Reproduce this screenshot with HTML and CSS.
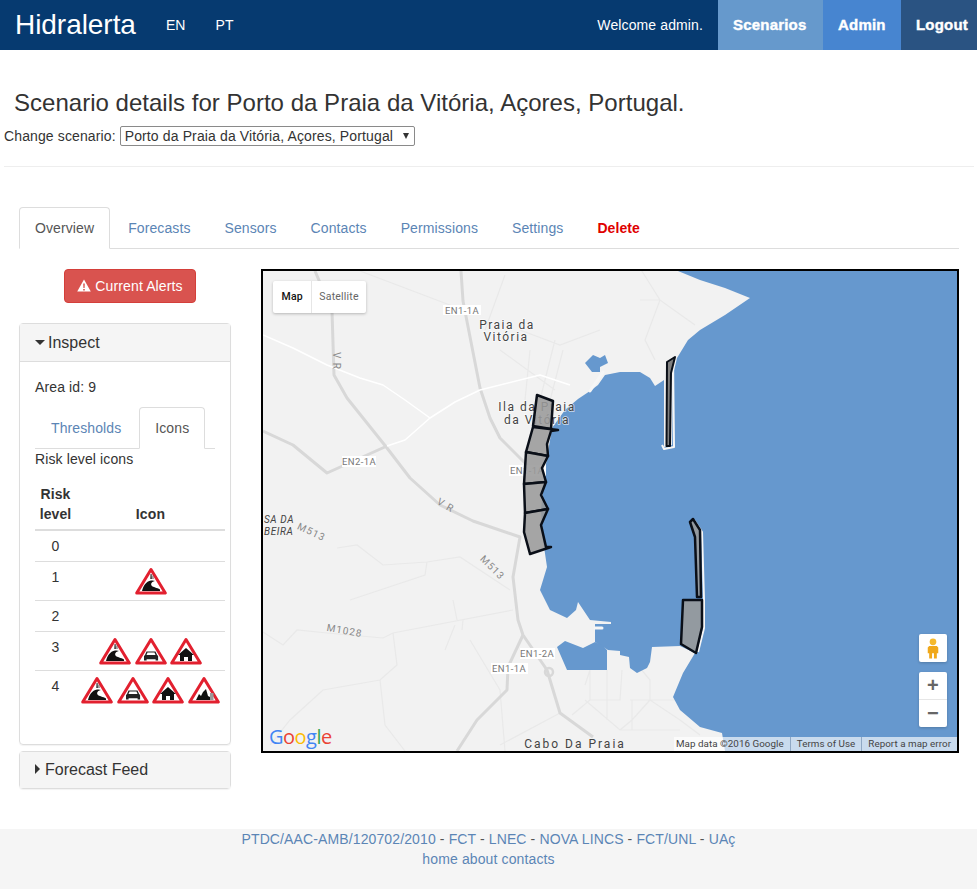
FILE: index.html
```html
<!DOCTYPE html>
<html lang="en">
<head>
<meta charset="utf-8">
<title>Hidralerta</title>
<link rel="stylesheet" href="styles.css">
</head>
<body>
<svg class="defs" aria-hidden="true">
  <symbol id="tri" viewBox="0 0 32 28"><path d="M16 2.5 30.3 26H1.7Z" fill="#fff" stroke="#e2202f" stroke-width="3" stroke-linejoin="round"/></symbol>
  <symbol id="i-wave" viewBox="0 0 32 28"><use href="#tri"/><path d="M7 24C8 19 11 14.500 16 13.500 18 13.200 19 13.500 20 14 17 14.500 15.500 16.500 16.500 18.500 18 20.500 22 20.500 25 22.500V24Z" fill="#111"/><path d="M15.500 7h1.200l.3 5h-1.800ZM17.500 8.500h.8l.2 3.500h-1Z" fill="#444"/></symbol>
  <symbol id="i-car" viewBox="0 0 32 28"><use href="#tri"/><path d="M11.500 14.500h9l1.600 3.500 1 1v4.500h-2.500v-1.300h-9v1.300H9v-4.500l1-1Z" fill="#222"/><path d="M12.500 15.500h7l1 2.500h-9Z" fill="#fff"/></symbol>
  <symbol id="i-house" viewBox="0 0 32 28"><use href="#tri"/><path d="M16 11 24 18h-2v6h-4v-4h-4v4h-4v-6H8Z" fill="#111"/></symbol>
  <symbol id="i-land" viewBox="0 0 32 28"><use href="#tri"/><path d="M8 24 11 18 13 20 15 16 18 13 20 20 22 21V24Z" fill="#111"/><path d="M22 17h3.500v7H22Z" fill="#999"/></symbol>
</svg>

<nav class="navbar">
  <a class="brand">Hidralerta</a>
  <a class="lang">EN</a>
  <a class="lang">PT</a>
  <span class="welcome">Welcome admin.</span>
  <a class="action scenarios">Scenarios</a>
  <a class="action admin">Admin</a>
  <a class="action logout">Logout</a>
</nav>

<header class="page-head">
  <h3 class="title">Scenario details for Porto da Praia da Vitória, Açores, Portugal.</h3>
  <div class="change">
    <label class="change-label">Change scenario:</label>
    <span class="select-wrap"><select class="change-select"><option>Porto da Praia da Vitória, Açores, Portugal</option></select></span>
  </div>
</header>
<hr class="rule">

<main class="content">
  <ul class="tabs">
    <li class="tab active">Overview</li>
    <li class="tab">Forecasts</li>
    <li class="tab">Sensors</li>
    <li class="tab">Contacts</li>
    <li class="tab">Permissions</li>
    <li class="tab">Settings</li>
    <li class="tab danger">Delete</li>
  </ul>

  <div class="columns">
    <aside class="side">
      <div class="alert-wrap">
        <button class="alert-btn"><svg class="warn" viewBox="0 0 14 13"><path d="M7 .5 13.800 12.500H.2Z" fill="#fff"/><path d="M6.200 4.500h1.600l-.2 4.500H6.400ZM6.200 10h1.600v1.500H6.200Z" fill="#d9534f"/></svg> Current Alerts</button>
      </div>

      <section class="panel">
        <div class="panel-head"><span class="caret-down"></span>Inspect</div>
        <div class="panel-body">
          <div>Area id: 9</div>
          <ul class="tabs inner">
            <li class="tab">Thresholds</li>
            <li class="tab active">Icons</li>
          </ul>
          <div>Risk level icons</div>
          <table class="risk">
            <thead><tr><th class="col-level">Risk level</th><th>Icon</th></tr></thead>
            <tbody>
              <tr><td>0</td><td></td></tr>
              <tr><td>1</td><td><div class="icons"><svg class="ico"><use href="#i-wave"/></svg></div></td></tr>
              <tr><td>2</td><td></td></tr>
              <tr><td>3</td><td><div class="icons"><svg class="ico"><use href="#i-wave"/></svg><svg class="ico"><use href="#i-car"/></svg><svg class="ico"><use href="#i-house"/></svg></div></td></tr>
              <tr class="last"><td>4</td><td><div class="icons"><svg class="ico"><use href="#i-wave"/></svg><svg class="ico"><use href="#i-car"/></svg><svg class="ico"><use href="#i-house"/></svg><svg class="ico"><use href="#i-land"/></svg></div></td></tr>
            </tbody>
          </table>
        </div>
      </section>

      <section class="panel closed">
        <div class="panel-head"><span class="caret-right"></span>Forecast Feed</div>
      </section>
    </aside>

    <div class="map">
      <svg class="map-canvas" viewBox="263 271 694 480">
        <rect x="263" y="271" width="694" height="480" fill="#f2f2f2"/>
        <!-- minor roads -->
        <g class="road-thin">
          <path d="M337 548 357 545 383 565 427 562 460 557 510 590"/>
          <path d="M263 632 283 645 297 630 327 633 383 638 393 633 513 610"/>
          <path d="M393 633 397 665 380 680 323 690 290 720 270 745"/>
          <path d="M380 680 385 725 405 751"/>
          <path d="M427 562 425 575 350 600"/>
          <path d="M470 640 500 690 505 751M560 713 500 745M455 625 445 650M453 600 457 620M463 620 462 630"/>
          <path d="M505 275 485 330M360 271 463 310M520 330 560 345 600 330M500 350 555 390M530 350 525 400M555 340 540 400M563 350 545 420"/>
          <path d="M640 268 660 300 645 340 655 360M640 300 660 300 695 325"/>
          <path d="M590 670V700L572 715M607 670V720M622 670 620 700H590M630 700H680M640 668 650 680V700L680 720 700 735M585 700 620 730H680M650 700 632 720 620 730M632 700V730M590 670 585 685"/>
        </g>
        <!-- water -->
        <path class="water" d="M678 271 700 280 725 288 750 298 725 315 700 330 688 340 677 358 673 375 672 445 664 447 664 380 655 386 650 378 640 372 620 372 605 375 598 385 590 391 578 399 565 410 552 428 545 470 541 510 543 540 547 567 540 590 550 610 567 618 576 610 578 602 590 620 611 622 611 624 595 624 595 642 608 650 620 651 620 655 629 657 630 668 637 673 647 668 650 662 652 647 680 646 695 653 683 673 673 697 680 710 700 727 722 733 725 751H957V271Z"/>
        <path class="water" d="M585 363 593 355 600 358 605 355 608 363 600 367 600 372 592 372Z"/>
        <path class="water" d="M557 647 565 641 583 648 595 642 602 645 607 650V670H567Z"/>
        <path class="pier" d="M603 372 590 391" />
        <path class="pier" d="M595 628H602" />
        <path class="halo" d="M673 358 674 447 664 449 662 445"/>
        <path class="halo" d="M694 520 702 532 704 600 704 628 698 652"/>
        <!-- main roads -->
        <g class="road">
          <path d="M315 271 332 311 334 375 347 398 387 448 410 478 440 505 473 521 520 537 513 577 518 620 523 635 547 670 560 713 593 737"/>
          <path d="M461 271 463 301 480 388 490 418 500 438 527 465"/>
          <path d="M263 431 293 445 327 473 387 446"/>
          <path d="M523 635 508 667 507 690 477 720 457 751"/>
        </g>
        <circle cx="549" cy="672" r="4" fill="none" stroke="#d8d8d8" stroke-width="2.500"/>
        <g class="road-white">
          <path d="M263 335 293 348 327 365 360 378 383 385 405 400 430 418"/>
          <path d="M387 446 405 440 430 418 455 402 480 390 540 375 570 385"/>
        </g>
        <!-- road shields -->
        <g class="shield-box">
          <rect x="443" y="305" width="38" height="10"/>
          <rect x="342" y="456" width="34" height="11"/>
          <rect x="509" y="465" width="37" height="11"/>
          <rect x="520" y="648" width="35" height="11"/>
          <rect x="491" y="663" width="37" height="11"/>
        </g>
        <g class="shield">
          <text x="462" y="314">EN1-1A</text>
          <text x="359" y="465">EN2-1A</text>
          <text x="527" y="474">EN1-1A</text>
          <text x="537" y="657">EN1-2A</text>
          <text x="509" y="672">EN1-1A</text>
        </g>
        <g class="road-name">
          <text transform="translate(333 361) rotate(90)">V R</text>
          <text transform="translate(444 508) rotate(30)">V R</text>
          <text transform="translate(310 535) rotate(25)">M513</text>
          <text transform="translate(490 570) rotate(45)">M513</text>
          <text transform="translate(344 634) rotate(10)">M1028</text>
        </g>
        <g class="place">
          <text x="507" y="329">Praia da</text>
          <text x="506" y="341">Vitória</text>
          <text x="537" y="411">Ila da Praia</text>
          <text x="537" y="424">da Vitória</text>
        </g>
        <text class="place-big" x="575" y="748">Cabo Da Praia</text>
        <text class="locality" x="264" y="523">SA DA</text>
        <text class="locality" x="264" y="535">BEIRA</text>
        <!-- areas -->
        <g class="area">
          <path d="M537 395 553 401 551 429 533 426Z"/>
          <path d="M533 427 558 430 551 431 547 444 548 456 526 452Z"/>
          <path d="M526 452 548 456 542 468 546 482 524 484Z"/>
          <path d="M524 484 546 482 541 495 548 509 525 513Z"/>
          <path d="M525 513 548 509 541 525 546 547 551 547 530 554 524 532Z"/>
          <path class="dark" d="M675 357 667 362 666.500 446 670 446 671 373Z"/>
          <path d="M690 522 693 519 700 530 701 597 697 597 695 537Z"/>
          <path d="M683 600H702V627L696 653 681 644Z"/>
        </g>
        <text class="google" x="269" y="744"><tspan fill="#4285f4">G</tspan><tspan fill="#ea4335">o</tspan><tspan fill="#fbbc05">o</tspan><tspan fill="#4285f4">g</tspan><tspan fill="#34a853">l</tspan><tspan fill="#ea4335">e</tspan></text>
      </svg>

      <div class="maptype">
        <span class="maptype-item on">Map</span>
        <span class="maptype-item">Satellite</span>
      </div>
      <div class="pegman">
        <svg class="peg-svg" viewBox="0 0 14 22"><circle cx="7" cy="4" r="3.500" fill="#f5b92c"/><path d="M3 8.500h8l1.500 1.500V16H11V21.500H8V16H6v5.500H3V16H1.500V10Z" fill="#f0a81a"/></svg>
      </div>
      <div class="zoom">
        <span class="zoom-btn">+</span>
        <span class="zoom-btn">−</span>
      </div>
      <div class="attrib">
        <span class="attrib-item first">Map data ©2016 Google</span>
        <span class="attrib-item">Terms of Use</span>
        <span class="attrib-item">Report a map error</span>
      </div>
    </div>
  </div>
</main>

<footer class="footer">
  <div><a>PTDC/AAC-AMB/120702/2010</a> - <a>FCT</a> - <a>LNEC</a> - <a>NOVA LINCS</a> - <a>FCT/UNL</a> - <a>UAç</a></div>
  <div><a>home</a> <a>about</a> <a>contacts</a></div>
</footer>
</body>
</html>
```
FILE: styles.css
```css
* { box-sizing: border-box; }
html, body { margin: 0; padding: 0; }
body {
  font-family: "Liberation Sans", Arial, sans-serif;
  font-size: 14px;
  line-height: 20px;
  letter-spacing: .12px;
  color: #333;
  background: #fff;
}
.defs { position: absolute; width: 0; height: 0; }

/* navbar */
.navbar {
  display: flex;
  align-items: center;
  height: 50px;
  background: #063a70;
  color: #fff;
}
.brand { font-size: 28px; margin-left: 15px; margin-right: 30px; letter-spacing: -.05px; }
.lang { margin-right: 30px; }
.welcome { margin-left: auto; margin-right: 15px; }
.action {
  height: 50px;
  line-height: 50px;
  padding: 0 15px;
  font-weight: bold;
  font-size: 15px;
  letter-spacing: .2px;
  -webkit-text-stroke: 0.4px #fff;
}
.scenarios { background: #6699cc; width: 105px; }
.admin { background: #4785d0; width: 78px; }
.logout { background: #2a5382; width: 76px; padding-right: 0; }

/* heading */
.page-head { padding: 40px 0 0; }
.title {
  margin: 0 0 0 14px;
  font-size: 24px;
  font-weight: normal;
  line-height: 26px;
  letter-spacing: .02px;
  color: #333;
}
.change {
  display: flex;
  align-items: center;
  margin: 10px 0 0 4px;
  height: 20px;
}
.change-label { margin-right: 4px; }
.select-wrap { position: relative; display: block; width: 295px; height: 20px; }
.select-wrap::after {
  content: "";
  position: absolute;
  right: 6px;
  top: 7px;
  border-top: 6px solid #333;
  border-left: 3.5px solid transparent;
  border-right: 3.5px solid transparent;
}
.change-select {
  display: block;
  appearance: none;
  -webkit-appearance: none;
  width: 295px;
  height: 20px;
  padding: 0 0 0 4px;
  font: 14px "Liberation Sans", Arial, sans-serif;
  letter-spacing: .13px;
  color: #333;
  background: #fff;
  border: 1px solid #8a8a8a;
  border-radius: 2px;
}
.rule {
  margin: 20px 3px 0 4px;
  border: 0;
  border-top: 1px solid #eee;
}

/* tabs */
.content { padding: 40px 18px 0 19px; }
.tabs {
  display: flex;
  list-style: none;
  margin: 0;
  padding: 0;
  border-bottom: 1px solid #ddd;
  letter-spacing: .1px;
}
.tab {
  height: 42px;
  margin-right: 2px;
  margin-bottom: -1px;
  padding: 10px 15px;
  border: 1px solid transparent;
  border-radius: 4px 4px 0 0;
  color: #5b85b5;
}
.tab.active {
  color: #555;
  background: #fff;
  border-color: #ddd #ddd #fff;
}
.tab.danger { color: #e00000; font-weight: bold; }

/* columns */
.columns {
  display: grid;
  grid-template-columns: 212px 698px;
  column-gap: 30px;
  margin-top: 20px;
}
.alert-wrap { display: flex; justify-content: center; padding-left: 10px; }
.alert-btn {
  height: 34px;
  width: 132px;
  padding: 0;
  font: 14px "Liberation Sans", Arial, sans-serif;
  letter-spacing: .12px;
  color: #fff;
  background: #d9534f;
  border: 1px solid #d43f3a;
  border-radius: 4px;
}
.warn { width: 14px; height: 13px; vertical-align: -1px; }

.panel {
  margin-top: 20px;
  border: 1px solid #ddd;
  border-radius: 4px;
  box-shadow: 0 1px 1px rgba(0,0,0,.05);
}
.panel.closed { margin-top: 6px; }
.panel-head {
  padding: 10px 15px;
  font-size: 16px;
  line-height: 17px;
  letter-spacing: 0;
  color: #333;
  background: #f5f5f5;
}
.closed .panel-head { line-height: 16px; }
.panel > .panel-body { border-top: 1px solid #ddd; }
.panel-body { padding: 15px 15px 35px; }
.caret-down, .caret-right { display: inline-block; margin-right: 3px; vertical-align: 3px; }
.caret-down { border-top: 5px solid #333; border-left: 5px solid transparent; border-right: 5px solid transparent; }
.caret-right { border-left: 5px solid #333; border-top: 5px solid transparent; border-bottom: 5px solid transparent; vertical-align: 1px; margin-right: 5px; }

.tabs.inner { margin-top: 10px; margin-right: 0; }
.risk {
  width: 190px;
  margin-top: 10px;
  border-collapse: collapse;
  table-layout: fixed;
}
.risk th, .risk td {
  padding: 5px 0;
  text-align: center;
  vertical-align: top;
  border-top: 1px solid #ddd;
}
.risk th { border-top: 0; border-bottom: 2px solid #ddd; vertical-align: bottom; }
.col-level { width: 41px; }
.risk td { height: 20px; }
.risk tr:nth-child(1) td { border-top: 0; }
.icons { display: flex; justify-content: center; gap: 3.500px; }
.ico { width: 32px; height: 28px; display: block; }

/* map */
.map {
  position: relative;
  width: 698px;
  height: 484px;
  border: 2px solid #000;
  overflow: hidden;
}
.map-canvas { display: block; width: 694px; height: 480px; }
.water { fill: #6698ce; }
.pier { fill: none; stroke: #f6f6f6; stroke-width: 3; stroke-linecap: round; }
.halo { fill: none; stroke: #f6f6f6; stroke-width: 2; stroke-linejoin: round; }
.road path { fill: none; stroke: #d8d8d8; stroke-width: 3; stroke-linejoin: round; }
.road-thin path { fill: none; stroke: #e9e9e9; stroke-width: 1.200; }
.road-white path { fill: none; stroke: #fff; stroke-width: 1.500; stroke-linejoin: round; }
.shield-box rect { fill: #fff; }
.shield text { font: 9.500px Roboto, sans-serif; fill: #777; text-anchor: middle; letter-spacing: .4px; }
.road-name text { font: 10px Roboto, sans-serif; fill: #888; text-anchor: middle; letter-spacing: 1px; }
.place text {
  font: 12px Roboto, sans-serif;
  fill: #444;
  text-anchor: middle;
  letter-spacing: 1.500px;
  stroke: #fff;
  stroke-width: 1.500px;
  stroke-opacity: .7;
  paint-order: stroke;
}
.place-big { font: 12px Roboto, sans-serif; fill: #444; text-anchor: middle; letter-spacing: 2px; }
.locality { font: italic 10px Roboto, sans-serif; fill: #444; letter-spacing: .6px; }
.area path {
  fill: #9a9a9a;
  fill-opacity: .88;
  stroke: #0a0f18;
  stroke-width: 2.500;
  stroke-linejoin: round;
}
.area .dark { fill: #808080; fill-opacity: 1; stroke-width: 2; }
.google { font: 500 20px "Open Sans", sans-serif; letter-spacing: -.5px; }

.maptype {
  position: absolute;
  left: 10px;
  top: 10px;
  display: flex;
  height: 32px;
  background: #fff;
  box-shadow: 0 1px 3px rgba(0,0,0,.25);
  border-radius: 2px;
  font: 10.500px/32px Roboto, sans-serif;
  letter-spacing: .2px;
}
.maptype-item { padding: 0 7px; color: #666; border-left: 1px solid #e6e6e6; }
.maptype-item.on { padding: 0 8.500px; color: #111; font-weight: 500; border-left: 0; }
.pegman, .zoom {
  position: absolute;
  right: 10px;
  width: 28px;
  background: #fff;
  border-radius: 2px;
  box-shadow: 0 1px 3px rgba(0,0,0,.2);
}
.pegman { top: 363px; height: 28px; display: flex; align-items: center; justify-content: center; }
.peg-svg { width: 14px; height: 21px; }
.zoom { top: 401px; height: 55px; display: flex; flex-direction: column; padding: 0; }
.zoom-btn {
  flex: 1;
  text-align: center;
  font: bold 20px/27px "Liberation Sans", sans-serif;
  color: #666;
}
.zoom-btn + .zoom-btn { border-top: 1px solid #e6e6e6; }
.attrib {
  position: absolute;
  right: 0;
  bottom: 0;
  height: 14px;
  display: flex;
  font: 9.800px/14px Roboto, sans-serif;
  letter-spacing: .05px;
  color: #444;
  background: rgba(255,255,255,.65);
}
.attrib-item { padding: 0 6px; border-left: 1px solid #8fa8c4; }
.attrib-item.first { border-left: 0; padding-left: 2px; }

/* footer */
.footer {
  height: 60px;
  margin-top: 40px;
  text-align: center;
  background: #f5f5f5;
  color: #555;
}
.footer a { color: #5b85b5; }
```
